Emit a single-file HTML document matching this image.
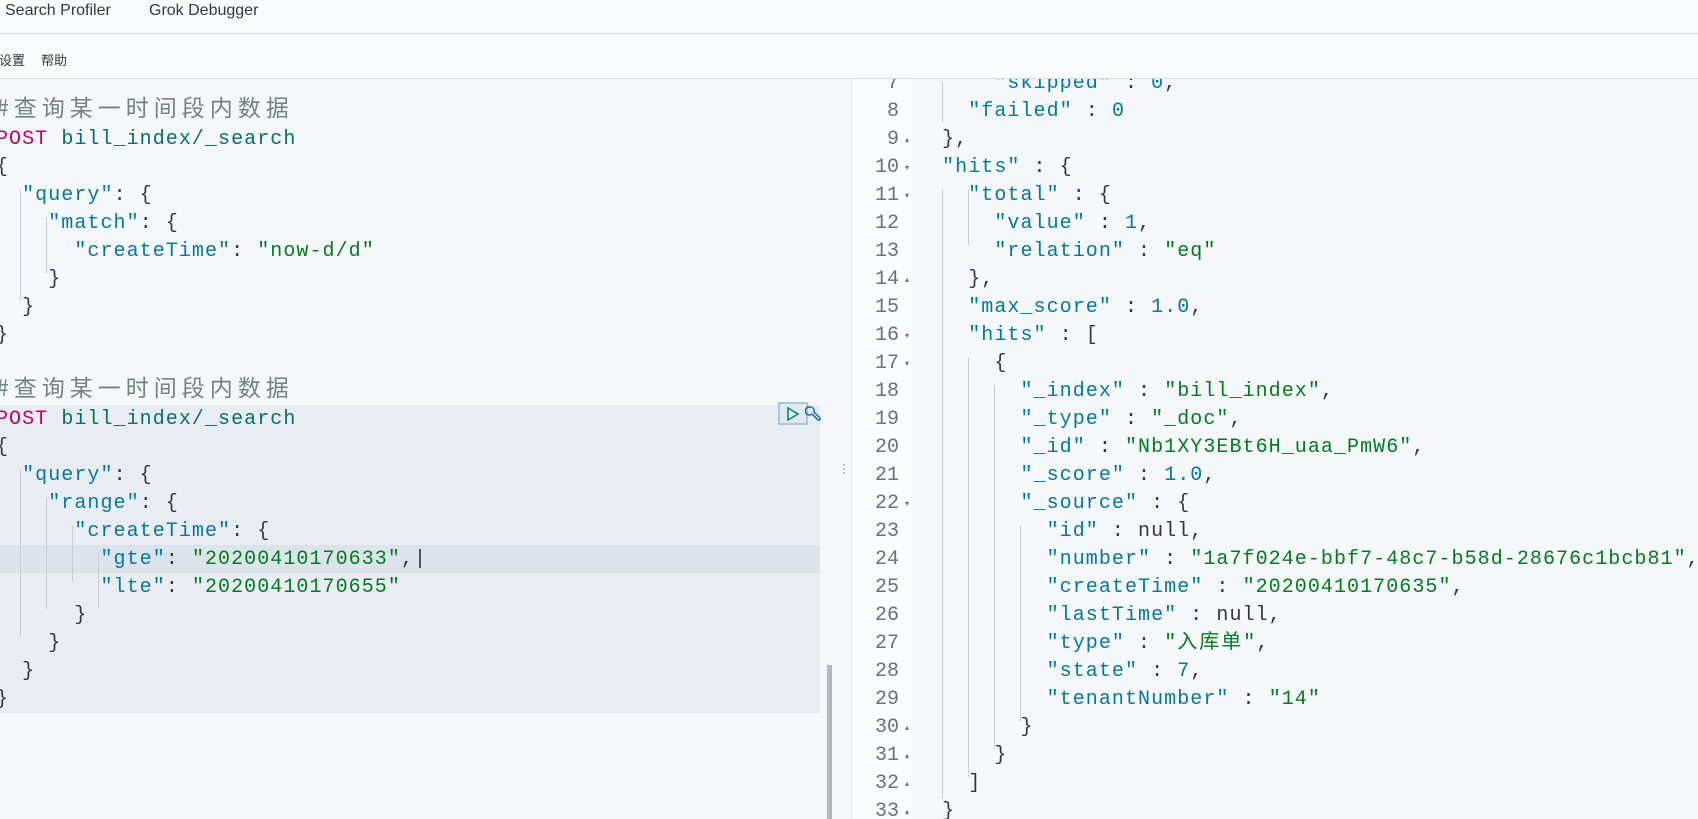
<!DOCTYPE html>
<html><head><meta charset="utf-8">
<style>
*{margin:0;padding:0;box-sizing:border-box}
html,body{width:1698px;height:819px;overflow:hidden;background:#fafbfd;font-family:"Liberation Sans","Noto Sans CJK SC",sans-serif}
.top{position:absolute;left:0;top:0;width:1698px;height:34px;border-bottom:1px solid #d3dae6;background:#fafbfd}
.top span{position:absolute;top:1px;font-size:16px;color:#343741;line-height:20px}
.tb{position:absolute;left:0;top:34px;width:1698px;height:45px;border-bottom:1px solid #d3dae6;background:#fafbfd}
.tb span{position:absolute;top:16px;font-size:13px;color:#343741;font-family:"Noto Sans CJK SC",sans-serif}
.left{position:absolute;left:0;top:79px;width:837px;height:740px;background:#f5f7fa;overflow:hidden}
.mid{position:absolute;left:837px;top:79px;width:15px;height:740px;background:#f5f7fa;border-right:1px solid #e6eaf0}
.gut{position:absolute;left:852px;top:79px;width:60px;height:740px;background:#fbfcfd;overflow:hidden}
.right{position:absolute;left:912px;top:79px;width:786px;height:740px;background:#f5f7fa;overflow:hidden}
.l{position:absolute;height:28px;line-height:28px;font-family:"Liberation Mono",monospace;font-size:20px;letter-spacing:1.06px;white-space:pre;color:#343741;transform:translateY(3px)}
.k{color:#0079a5}.s{color:#017d1e}.n{color:#0079a5}.p{color:#343741}
.c{color:#75837d;font-family:"Noto Sans CJK SC",sans-serif;font-size:23px;letter-spacing:5px;line-height:0}
.m{color:#c5006b}.u{color:#00726b}
.cj{font-family:"Noto Sans CJK SC",sans-serif;font-size:20px;letter-spacing:2px;line-height:0}
.g{position:absolute;width:1px;background:#c9ced6;transform:translateY(3px)}
.ln{position:absolute;right:13px;width:50px;text-align:right;height:28px;line-height:28px;font-family:"Liberation Mono",monospace;font-size:20px;color:#69707d;transform:translateY(3px)}
.ar{position:absolute;left:53px;font-size:8px;color:#69707d;transform:translateY(3px)}
</style></head><body>
<div class="top"><span style="left:5px">Search Profiler</span><span style="left:149px">Grok Debugger</span></div>
<div class="tb"><span style="left:-1px">设置</span><span style="left:41px">帮助</span></div>

<div class="left">
<div style="position:absolute;left:0;top:326px;width:820px;height:308px;background:#e9edf3"></div>
<div style="position:absolute;left:0;top:466px;width:820px;height:28px;background:#dde3ea"></div>
<div style="position:absolute;left:827px;top:586px;width:5px;height:160px;background:#b3b8bf"></div>
<div style="position:absolute;left:778px;top:323px;width:30px;height:23px;border:2px solid #a9c6e0;background:#e1e8f0"></div>
<svg style="position:absolute;left:786px;top:327px" width="14" height="16" viewBox="0 0 14 16"><path d="M2 2 L12 8 L2 14 Z" fill="none" stroke="#0b8a7c" stroke-width="1.6"/></svg>
<svg style="position:absolute;left:805px;top:326px" width="17" height="18" viewBox="0 0 17 18"><path d="M4 2 a4 4 0 1 0 3 7 l6 6 a1.5 1.5 0 0 0 2-2 l-6-6 a4 4 0 0 0-3-5 z" fill="none" stroke="#006bb8" stroke-width="1.4"/></svg>
<div class="g" style="left:20px;top:107px;height:112px"></div>
<div class="g" style="left:46px;top:135px;height:56px"></div>
<div class="g" style="left:20px;top:387px;height:168px"></div>
<div class="g" style="left:46px;top:415px;height:112px"></div>
<div class="g" style="left:72px;top:443px;height:56px"></div>
<div class="g" style="left:98px;top:471px;height:56px"></div>
</div>
<div style="position:absolute;left:0;top:79px;width:837px;height:740px;overflow:hidden">
<div class="l" style="left:-4px;top:16px"><span class="c">#查询某一时间段内数据</span></div>
<div class="l" style="left:-4px;top:44px"><span class="m">POST</span> <span class="u">bill_index/_search</span></div>
<div class="l" style="left:-4px;top:72px">{</div>
<div class="l" style="left:-4px;top:100px">  <span class="k">"query"</span>: {</div>
<div class="l" style="left:-4px;top:128px">    <span class="k">"match"</span>: {</div>
<div class="l" style="left:-4px;top:156px">      <span class="k">"createTime"</span>: <span class="s">"now-d/d"</span></div>
<div class="l" style="left:-4px;top:184px">    }</div>
<div class="l" style="left:-4px;top:212px">  }</div>
<div class="l" style="left:-4px;top:240px">}</div>
<div class="l" style="left:-4px;top:296px"><span class="c">#查询某一时间段内数据</span></div>
<div class="l" style="left:-4px;top:324px"><span class="m">POST</span> <span class="u">bill_index/_search</span></div>
<div class="l" style="left:-4px;top:352px">{</div>
<div class="l" style="left:-4px;top:380px">  <span class="k">"query"</span>: {</div>
<div class="l" style="left:-4px;top:408px">    <span class="k">"range"</span>: {</div>
<div class="l" style="left:-4px;top:436px">      <span class="k">"createTime"</span>: {</div>
<div class="l" style="left:-4px;top:464px">        <span class="k">"gte"</span>: <span class="s">"20200410170633"</span>,|</div>
<div class="l" style="left:-4px;top:492px">        <span class="k">"lte"</span>: <span class="s">"20200410170655"</span></div>
<div class="l" style="left:-4px;top:520px">      }</div>
<div class="l" style="left:-4px;top:548px">    }</div>
<div class="l" style="left:-4px;top:576px">  }</div>
<div class="l" style="left:-4px;top:604px">}</div>
</div>

<div class="mid"><div style="position:absolute;left:5px;top:383px;font-size:12px;color:#69707d;line-height:4px">·<br>·<br>·</div></div>

<div class="gut">
<div class="ln" style="top:-12px">7</div>
<div class="ln" style="top:16px">8</div>
<div class="ln" style="top:44px">9</div><div class="ar" style="top:53px">▴</div>
<div class="ln" style="top:72px">10</div><div class="ar" style="top:81px">▾</div>
<div class="ln" style="top:100px">11</div><div class="ar" style="top:109px">▾</div>
<div class="ln" style="top:128px">12</div>
<div class="ln" style="top:156px">13</div>
<div class="ln" style="top:184px">14</div><div class="ar" style="top:193px">▴</div>
<div class="ln" style="top:212px">15</div>
<div class="ln" style="top:240px">16</div><div class="ar" style="top:249px">▾</div>
<div class="ln" style="top:268px">17</div><div class="ar" style="top:277px">▾</div>
<div class="ln" style="top:296px">18</div>
<div class="ln" style="top:324px">19</div>
<div class="ln" style="top:352px">20</div>
<div class="ln" style="top:380px">21</div>
<div class="ln" style="top:408px">22</div><div class="ar" style="top:417px">▾</div>
<div class="ln" style="top:436px">23</div>
<div class="ln" style="top:464px">24</div>
<div class="ln" style="top:492px">25</div>
<div class="ln" style="top:520px">26</div>
<div class="ln" style="top:548px">27</div>
<div class="ln" style="top:576px">28</div>
<div class="ln" style="top:604px">29</div>
<div class="ln" style="top:632px">30</div><div class="ar" style="top:641px">▴</div>
<div class="ln" style="top:660px">31</div><div class="ar" style="top:669px">▴</div>
<div class="ln" style="top:688px">32</div><div class="ar" style="top:697px">▴</div>
<div class="ln" style="top:716px">33</div><div class="ar" style="top:725px">▴</div>
</div>

<div class="right">
<div class="g" style="left:30px;top:0;height:40px"></div>
<div class="g" style="left:56px;top:107px;height:56px"></div>
<div class="g" style="left:30px;top:107px;height:610px"></div>
<div class="g" style="left:56px;top:275px;height:420px"></div>
<div class="g" style="left:82px;top:303px;height:364px"></div>
<div class="g" style="left:108px;top:443px;height:196px"></div>
<div class="l" style="left:4px;top:-12px">      <span class="k">"skipped"</span> : <span class="n">0</span>,</div>
<div class="l" style="left:4px;top:16px">    <span class="k">"failed"</span> : <span class="n">0</span></div>
<div class="l" style="left:4px;top:44px">  },</div>
<div class="l" style="left:4px;top:72px">  <span class="k">"hits"</span> : {</div>
<div class="l" style="left:4px;top:100px">    <span class="k">"total"</span> : {</div>
<div class="l" style="left:4px;top:128px">      <span class="k">"value"</span> : <span class="n">1</span>,</div>
<div class="l" style="left:4px;top:156px">      <span class="k">"relation"</span> : <span class="s">"eq"</span></div>
<div class="l" style="left:4px;top:184px">    },</div>
<div class="l" style="left:4px;top:212px">    <span class="k">"max_score"</span> : <span class="n">1.0</span>,</div>
<div class="l" style="left:4px;top:240px">    <span class="k">"hits"</span> : [</div>
<div class="l" style="left:4px;top:268px">      {</div>
<div class="l" style="left:4px;top:296px">        <span class="k">"_index"</span> : <span class="s">"bill_index"</span>,</div>
<div class="l" style="left:4px;top:324px">        <span class="k">"_type"</span> : <span class="s">"_doc"</span>,</div>
<div class="l" style="left:4px;top:352px">        <span class="k">"_id"</span> : <span class="s">"Nb1XY3EBt6H_uaa_PmW6"</span>,</div>
<div class="l" style="left:4px;top:380px">        <span class="k">"_score"</span> : <span class="n">1.0</span>,</div>
<div class="l" style="left:4px;top:408px">        <span class="k">"_source"</span> : {</div>
<div class="l" style="left:4px;top:436px">          <span class="k">"id"</span> : null,</div>
<div class="l" style="left:4px;top:464px">          <span class="k">"number"</span> : <span class="s">"1a7f024e-bbf7-48c7-b58d-28676c1bcb81"</span>,</div>
<div class="l" style="left:4px;top:492px">          <span class="k">"createTime"</span> : <span class="s">"20200410170635"</span>,</div>
<div class="l" style="left:4px;top:520px">          <span class="k">"lastTime"</span> : null,</div>
<div class="l" style="left:4px;top:548px">          <span class="k">"type"</span> : <span class="s">"<span class="cj">入库单</span>"</span>,</div>
<div class="l" style="left:4px;top:576px">          <span class="k">"state"</span> : <span class="n">7</span>,</div>
<div class="l" style="left:4px;top:604px">          <span class="k">"tenantNumber"</span> : <span class="s">"14"</span></div>
<div class="l" style="left:4px;top:632px">        }</div>
<div class="l" style="left:4px;top:660px">      }</div>
<div class="l" style="left:4px;top:688px">    ]</div>
<div class="l" style="left:4px;top:716px">  }</div>
</div>
</body></html>
